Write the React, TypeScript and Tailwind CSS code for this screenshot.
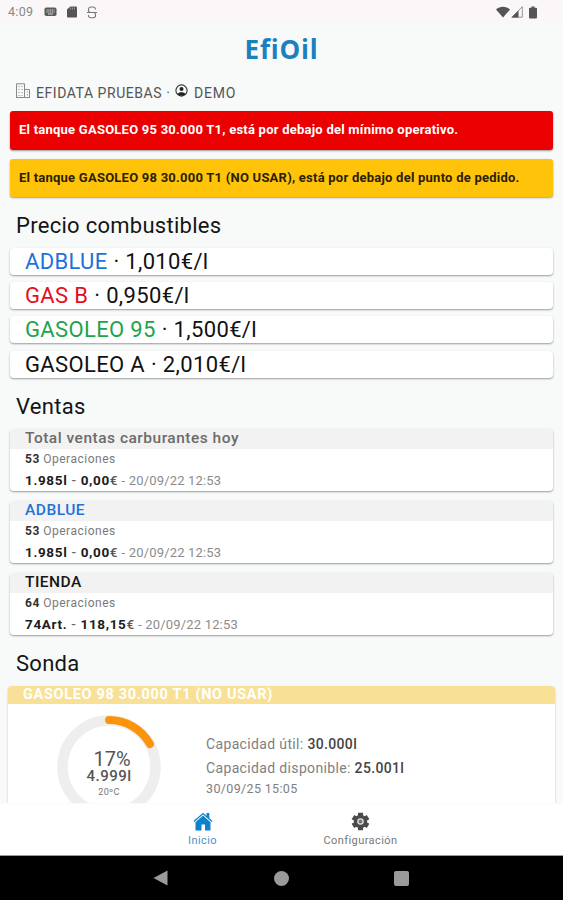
import type { ReactNode } from "react";

const PRICES = [
  { name: "ADBLUE", price: "1,010€/l", color: "text-[#1f72d8]", track: "tracking-[0.34px]" },
  { name: "GAS B", price: "0,950€/l", color: "text-[#e3101c]", track: "tracking-[0.36px]" },
  { name: "GASOLEO 95", price: "1,500€/l", color: "text-[#1ba44c]", track: "tracking-[0.36px]" },
  { name: "GASOLEO A", price: "2,010€/l", color: "text-[#111111]", track: "tracking-[0.36px]" },
];

const SALES = [
  { title: "Total ventas carburantes hoy", color: "text-[#6b6b6b]", ops: 53, qty: "1.985l", amount: "0,00" },
  { title: "ADBLUE", color: "text-[#1f72d8]", ops: 53, qty: "1.985l", amount: "0,00" },
  { title: "TIENDA", color: "text-[#161616]", ops: 64, qty: "74Art.", amount: "118,15" },
];

const CARD_SHADOW = "shadow-[0_1px_2px_rgba(0,0,0,0.38)]";

function StatusBar() {
  return (
    <div className="flex h-6 shrink-0 items-center justify-between bg-[#fbf7f9] pl-2 pr-[26px] text-[#555555]">
      <div className="flex items-center">
        <span className="w-[36px] text-[12.5px] leading-6 tracking-[0.3px] text-[#888888]">4:09</span>
        <svg width="13" height="10" viewBox="0 0 13 10" className="block">
          <rect x="0.5" y="0.5" width="12" height="8.5" rx="1.8" fill="#5a5a5a" />
          <path d="M2.5 3h8M2.5 5h8" stroke="#e4e2e3" strokeWidth="1" strokeDasharray="1.2 0.6" />
          <path d="M4 7h5" stroke="#e4e2e3" strokeWidth="0.9" />
        </svg>
        <svg width="10" height="12" viewBox="0 0 10 12" className="ml-[10px] block">
          <path d="M3.2 0.5H9a1 1 0 0 1 1 1V10.5a1 1 0 0 1-1 1H1a1 1 0 0 1-1-1V3.6Z" fill="#555555" />
          <path d="M3.5 1.5v2M5.5 1.5v2M7.5 1.5v2" stroke="#a5a3a4" strokeWidth="0.8" />
        </svg>
        <svg width="10" height="13" viewBox="0 0 10 13" className="ml-[10px] block" fill="none" stroke="#777777" strokeWidth="1.1">
          <path d="M8.500 3.500V3A2.200 2.200 0 0 0 6.300 1H3.700A2.200 2.200 0 0 0 1.500 3v1.300A2.200 2.200 0 0 0 3.700 6.500M1.500 9v.7a2 2 0 0 0 2.200 2h2.600a2.200 2.200 0 0 0 2.200-2.200V8.500A2 2 0 0 0 7 6.500M0 6.500h10" />
        </svg>
      </div>
      <div className="flex items-center">
        <svg width="14" height="12" viewBox="0 0 14 12" className="block">
          <path d="M0 3.600C4 -0.200 10 -0.200 14 3.600L7 11.600Z" fill="#555555" />
        </svg>
        <svg width="12" height="12" viewBox="0 0 12 12" className="ml-[1px] block">
          <path d="M0.800 11.200 11.300 0.700V11.200Z" fill="none" stroke="#888888" strokeWidth="0.9" />
          <path d="M0.500 11.500 7.500 4.500V11.500Z" fill="#555555" />
        </svg>
        <svg width="8" height="13" viewBox="0 0 8 13" className="ml-[6px] block">
          <path d="M2.500 0.500h3v1.200H7a1 1 0 0 1 1 1V11.500a1 1 0 0 1-1 1H1a1 1 0 0 1-1-1V2.700a1 1 0 0 1 1-1h1.500Z" fill="#555555" />
        </svg>
      </div>
    </div>
  );
}

function UserLine() {
  return (
    <div className="flex h-5 items-center whitespace-nowrap pl-4 text-[14px] text-[#555555]">
      <svg width="15" height="15" viewBox="0 0 15 15" className="mb-1 block" fill="none" stroke="#888888" strokeWidth="1">
        <path d="M0.500 14.500V0.800H8.500V14.500M8.500 6.500H13.500V14.500M0 14.500H14" />
        <path d="M2.500 3.500h1M5.500 3.500h1M2.500 6.500h1M5.500 6.500h1M2.500 9.500h1M5.500 9.500h1M2.500 12.500h1M5.500 12.500h1M11 9h1M11 11.800h1" />
      </svg>
      <span className="ml-[5px] w-[139px] pt-0.5 tracking-[0.55px]">EFIDATA PRUEBAS ·</span>
      <svg width="13" height="13" viewBox="0 0 13 13" className="mb-[3px] block">
        <circle cx="6.500" cy="6.500" r="5.600" fill="none" stroke="#333333" strokeWidth="1.100" />
        <circle cx="6.500" cy="4.900" r="2" fill="#222222" />
        <path d="M2.500 9.900C3.500 7.600 9.500 7.600 10.500 9.900 8.500 12.200 4.500 12.200 2.500 9.900Z" fill="#222222" />
      </svg>
      <span className="ml-[6px] pt-0.5 tracking-[0.8px]">DEMO</span>
    </div>
  );
}

function Alert({ className, children }: { className: string; children: ReactNode }) {
  return (
    <div className={`flex h-[38.5px] items-center whitespace-nowrap rounded-[3px] pl-[9px] text-[13px] font-bold ${CARD_SHADOW} ${className}`}>
      {children}
    </div>
  );
}

function SectionTitle({ children }: { children: ReactNode }) {
  return <h2 className="pl-4 text-[22px] leading-7 tracking-[0.28px] text-[#151515]">{children}</h2>;
}

function SaleCard({ s }: { s: typeof SALES[0] }) {
  return (
    <div className={`h-[62px] overflow-hidden whitespace-nowrap rounded-[4px] bg-white ${CARD_SHADOW}`}>
      <div className={`h-5 bg-[#f2f2f2] pl-[15px] text-[15.5px] font-medium leading-[19px] tracking-[0.5px] ${s.color}`}>{s.title}</div>
      <div className="pl-[15px] text-[12px] leading-[21px] tracking-[0.5px] text-[#7a7a7a]">
        <b className="font-bold text-[#333333]">{s.ops}</b> Operaciones
      </div>
      <div className="pl-[15px] text-[13px] leading-[21px] tracking-[0.17px] text-[#8c8c8c]">
        <b className="text-[13.5px] font-bold tracking-[0.65px] text-[#1c1c1c]">
          {s.qty} <span className="font-medium text-[#666666]">-</span> {s.amount}
          <span className="font-medium text-[#555555]">€</span>
        </b>{" "}
        - 20/09/22 12:53
      </div>
    </div>
  );
}

function Gauge() {
  const r = 46.5;
  const length = 2 * Math.PI * r;
  return (
    <div className="relative h-[104px] w-[104px]">
      <svg width="104" height="104" viewBox="0 0 104 104" className="block" fill="none">
        <circle cx="52" cy="52" r={r} stroke="#eeeeee" strokeWidth="10.5" />
        <circle
          cx="52"
          cy="52"
          r={r + 0.5}
          stroke="#fb940a"
          strokeWidth="8"
          strokeLinecap="round"
          strokeDasharray={`${length * 0.17} ${length}`}
          transform="rotate(-90 52 52)"
        />
      </svg>
      <div className="absolute inset-0 flex flex-col items-center pt-[33px] text-[#555555]">
        <span className="pl-1.5 text-[20px] leading-[22px]">17%</span>
        <span className="text-[15px] font-medium leading-[13px] tracking-[0.5px]">4.999l</span>
        <span className="mt-[3px] text-[9px] leading-[12px] tracking-[0.3px] text-[#777777]">20ºC</span>
      </div>
    </div>
  );
}

function TankCard() {
  return (
    <div className="mx-[-2px] h-[160px] overflow-hidden whitespace-nowrap rounded-[4px] bg-white shadow-[0_1px_2px_rgba(0,0,0,0.25)]">
      <div className="h-[18px] bg-[#f8e196] pl-[15px] text-[14.5px] font-bold leading-[18px] tracking-[0.67px] text-white">
        GASOLEO 98 30.000 T1 (NO USAR)
      </div>
      <div className="flex pl-[49px] pt-[11px]">
        <Gauge />
        <div className="ml-[45px] pt-[17px] text-[14px] leading-6 tracking-[0.35px] text-[#808080]">
          <div>
            Capacidad útil: <b className="font-medium text-[#444444]">30.000l</b>
          </div>
          <div>
            Capacidad disponible: <b className="font-medium text-[#444444]">25.001l</b>
          </div>
          <div className="text-[12.5px] leading-[17px]">30/09/25 15:05</div>
        </div>
      </div>
    </div>
  );
}

function TabBar() {
  return (
    <div className="flex h-[53px] shrink-0 justify-center border-b border-[#9a9a9a] border-t border-t-[#fafafa] bg-white text-[11px] tracking-[0.42px]">
      <div className="flex w-[158px] flex-col items-center pt-[8px] text-[#4d8fc8]">
        <svg width="20" height="19" viewBox="0 0 20 19" className="block">
          <path d="M13.500 1h2.800V7L13.500 4.500Z" fill="#0b82cb" />
          <path d="M0.900 9.500 10 1.500 19.100 9.500" fill="none" stroke="#0b82cb" strokeWidth="1.300" />
          <path d="M10 3.500 17.500 10.200V18.500H12V12.500H8.500V18.500H2.500V10.200Z" fill="#0b82cb" />
        </svg>
        <span className="pt-px leading-[17px]">Inicio</span>
      </div>
      <div className="flex w-[158px] flex-col items-center pt-[8px] text-[#777777]">
        <svg width="19" height="19" viewBox="0 0 20 20" className="block">
          <g stroke="#4b4b4b" strokeWidth="5.400">
            <path d="M10 0.800V19.200" />
            <path d="M10 0.800V19.200" transform="rotate(60 10 10)" />
            <path d="M10 0.800V19.200" transform="rotate(120 10 10)" />
          </g>
          <circle cx="10" cy="10" r="7" fill="#4b4b4b" />
          <circle cx="10" cy="10" r="2.800" fill="#777777" stroke="#e4e4e4" strokeWidth="1.300" />
        </svg>
        <span className="pt-px leading-[17px]">Configuración</span>
      </div>
    </div>
  );
}

function SystemNav() {
  return (
    <div className="flex h-11 shrink-0 items-center justify-center gap-[105px] bg-black pr-[2px]">
      <svg width="16" height="16" viewBox="0 0 16 16" className="block">
        <path d="M0.500 8 14.500 0.500V15.500Z" fill="#9a9a9a" />
      </svg>
      <span className="h-[15px] w-[15px] rounded-full bg-[#9a9a9a]" />
      <span className="h-[15px] w-[15px] rounded-[2px] bg-[#9a9a9a]" />
    </div>
  );
}

export default function App() {
  return (
    <div className="flex h-[900px] w-[563px] flex-col overflow-hidden bg-[#f7faf9] font-['Roboto',sans-serif]">
      <StatusBar />
      <main className="min-h-0 flex-1 overflow-hidden">
        <h1 className="pt-[8px] text-center font-['Open_Sans',sans-serif] text-[26px] font-bold leading-[34px] tracking-[0.8px] text-[#1a80c2]">
          EfiOil
        </h1>
        <div className="pt-[16px]">
          <UserLine />
        </div>
        <div className="px-[10px]">
          <div className="flex flex-col gap-[9px] pt-[9px]">
            <Alert className="bg-[#ea0000] pb-[2px] tracking-[0.235px] text-white">
              El tanque GASOLEO 95 30.000 T1, está por debajo del mínimo operativo.
            </Alert>
            <Alert className="bg-[#ffc409] pb-px tracking-[0.235px] text-[#2b2100]">
              El tanque GASOLEO 98 30.000 T1 (NO USAR), está por debajo del punto de pedido.
            </Alert>
          </div>
          <div className="-ml-[10px] pt-[15px]">
            <SectionTitle>Precio combustibles</SectionTitle>
          </div>
          <div className="flex flex-col gap-[7.2px] pt-2">
            {PRICES.map((p) => (
              <div
                key={p.name}
                className={`h-[27px] whitespace-nowrap rounded-[4px] bg-white pl-[15px] text-[22px] leading-[27px] text-[#111111] ${CARD_SHADOW} ${p.track}`}
              >
                <span className={p.color}>{p.name}</span> · {p.price}
              </div>
            ))}
          </div>
          <div className="-ml-[10px] pt-[15px]">
            <SectionTitle>Ventas</SectionTitle>
          </div>
          <div className="flex flex-col gap-[10px] pt-[8px]">
            {SALES.map((s) => (
              <SaleCard key={s.title} s={s} />
            ))}
          </div>
          <div className="-ml-[10px] pt-[15px] pb-[8px]">
            <SectionTitle>Sonda</SectionTitle>
          </div>
          <TankCard />
        </div>
      </main>
      <TabBar />
      <SystemNav />
    </div>
  );
}
